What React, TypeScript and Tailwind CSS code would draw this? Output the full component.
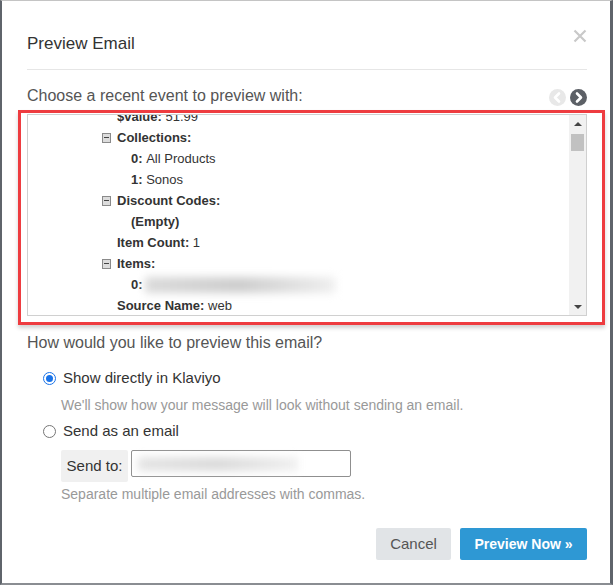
import React from 'react';

const Minus = () => (
  <span className="w-[9px] h-[10px] border border-[#8a8a8a] bg-[#dcdcdc] flex items-center justify-center">
    <span className="w-[5px] h-px bg-[#444]" />
  </span>
);

const Row: React.FC<{ level: 1 | 2; icon?: boolean; children: React.ReactNode }> = ({ level, icon, children }) => (
  <div className={`flex items-center h-[21px] ${level === 1 ? 'pl-[74px]' : 'pl-[88px]'}`}>
    <span className="w-[15px] flex items-center">{icon && <Minus />}</span>
    <span className="whitespace-nowrap flex items-center">{children}</span>
  </div>
);

const CircleArrow: React.FC<{ dir: 'left' | 'right'; active?: boolean }> = ({ dir, active }) => (
  <svg width="17" height="17" viewBox="0 0 17 17">
    <circle cx="8.5" cy="8.5" r="8.5" fill={active ? '#5c6066' : '#e8e8e8'} />
    <path d={dir === 'right' ? 'M7 4.5 L11 8.5 L7 12.5' : 'M10 4.5 L6 8.5 L10 12.5'}
      fill="none" stroke="#fff" strokeWidth="2.6" strokeLinecap="round" strokeLinejoin="round" />
  </svg>
);

export default function App() {
  return (
    <div className="w-[613px] h-[585px] bg-white border-t border-t-[#c4c4c4] border-l-2 border-l-[#5f646b] border-r-[3px] border-r-[#5f646b] border-b-2 border-b-[#8a8d92] pl-[25px] pr-[23px] flex flex-col text-[#333]"
      style={{ fontFamily: '"Liberation Sans", Arial, sans-serif' }}>
      <header className="flex justify-between items-start pt-[32px]">
        <h2 className="text-[17px] leading-[22px] text-[#333]">Preview Email</h2>
        <svg width="14" height="14" viewBox="0 0 14 14" className="-mt-[4px]">
          <path d="M1.5 1.5 L12.5 12.5 M12.5 1.5 L1.5 12.5" stroke="#c9c9c9" strokeWidth="2.2" />
        </svg>
      </header>
      <div className="mt-[14px] h-px bg-[#e6e6e6]" />

      <div className="mt-[16px] flex items-center justify-between h-[20px]">
        <p className="text-[16px] leading-[20px] text-[#555]">Choose a recent event to preview with:</p>
        <div className="flex items-center gap-[4px] mt-[2px]">
          <CircleArrow dir="left" />
          <CircleArrow dir="right" active />
        </div>
      </div>

      <div className="mt-[4px] -ml-[9px] -mr-[18px] border-[3px] border-[#ee3c40] pt-[1px] pl-[6px] pr-[15px] pb-[6px] shadow-[0_3px_4px_rgba(0,0,0,0.18)]">
        <div className="h-[202px] border border-[#d0d0d0] flex overflow-hidden">
          <div className="flex-1 text-[13px] leading-[21px] text-[#333] -mt-[9px]">
            <Row level={1}><b>$value:</b>&nbsp;51.99</Row>
            <Row level={1} icon><b>Collections:</b></Row>
            <Row level={2}><b>0:</b>&nbsp;All Products</Row>
            <Row level={2}><b>1:</b>&nbsp;Sonos</Row>
            <Row level={1} icon><b>Discount Codes:</b></Row>
            <Row level={2}><b>(Empty)</b></Row>
            <Row level={1}><b>Item Count:</b>&nbsp;1</Row>
            <Row level={1} icon><b>Items:</b></Row>
            <Row level={2}>
              <b>0:</b>
              <span className="ml-[2px] w-[190px] h-[16px] bg-gradient-to-r from-[#dadada] via-[#cdcdcd] to-[#efefef] blur-[4px]" />
            </Row>
            <Row level={1}><b>Source Name:</b>&nbsp;web</Row>
          </div>
          <div className="w-[17px] bg-[#f1f1f1] flex flex-col items-center">
            <div className="h-[17px] flex items-center justify-center">
              <span className="w-0 h-0 border-l-[4px] border-r-[4px] border-b-[4px] border-l-transparent border-r-transparent border-b-[#444]" />
            </div>
            <div className="mt-[2px] w-[13px] h-[17px] bg-[#c1c1c1]" />
            <div className="flex-1" />
            <div className="h-[17px] flex items-center justify-center">
              <span className="w-0 h-0 border-l-[4px] border-r-[4px] border-t-[4px] border-l-transparent border-r-transparent border-t-[#444]" />
            </div>
          </div>
        </div>
      </div>

      <p className="mt-[8px] text-[16px] leading-[20px] text-[#555]">How would you like to preview this email?</p>

      <label className="mt-[15px] ml-[16px] flex items-center gap-[7px] h-[20px] text-[15px] text-[#333]">
        <span className="w-[13px] h-[13px] rounded-full border border-[#1a73e8] flex items-center justify-center">
          <span className="w-[7px] h-[7px] rounded-full bg-[#1a73e8]" />
        </span>
        Show directly in Klaviyo
      </label>
      <p className="mt-[8px] pl-[34px] text-[14px] leading-[18px] text-[#999]">We'll show how your message will look without sending an email.</p>

      <label className="mt-[7px] ml-[16px] flex items-center gap-[7px] h-[20px] text-[15px] text-[#333]">
        <span className="w-[13px] h-[13px] rounded-full border border-[#767676] bg-white" />
        Send as an email
      </label>

      <div className="mt-[9px] pl-[34px] flex items-start gap-[3px]">
        <span className="w-[67px] h-[32px] bg-[#f0f0f0] rounded-[2px] flex items-center justify-center text-[15px] text-[#333]">Send to:</span>
        <div className="w-[220px] h-[27px] border border-[#8f8f8f] rounded-[2px] flex items-center px-[6px]">
          <span className="w-[160px] h-[14px] bg-gradient-to-r from-[#e4e4e4] via-[#dadada] to-[#f0f0f0] blur-[4px]" />
        </div>
      </div>
      <p className="mt-[3px] pl-[34px] text-[14px] leading-[18px] text-[#999]">Separate multiple email addresses with commas.</p>

      <div className="mt-[25px] flex justify-end gap-[9px]">
        <button className="w-[75px] h-[32px] rounded-[2px] bg-[#e1e4e7] text-[15px] text-[#555]">Cancel</button>
        <button className="w-[127px] h-[32px] rounded-[2px] bg-[#2e98d4] text-[14px] font-bold text-white">Preview Now »</button>
      </div>
    </div>
  );
}
